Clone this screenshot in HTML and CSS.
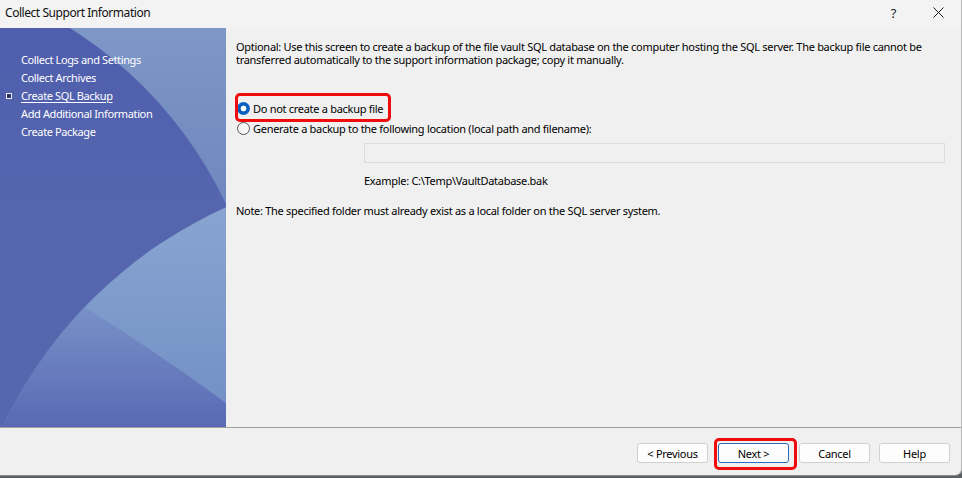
FILE: index.html
```html
<!DOCTYPE html>
<html>
<head>
<meta charset="utf-8">
<link rel="stylesheet" href="styles.css">
</head>
<body>
<div class="window">
  <div class="titlebar">
    <span class="title">Collect Support Information</span>
    <div class="controls">
      <span class="ctl help">?</span>
      <span class="ctl close"><svg width="11" height="11" viewBox="0 0 11 11"><path d="M0.5 0.5L10.5 10.5M10.5 0.5L0.5 10.5" stroke="#1a1a1a" stroke-width="1"/></svg></span>
    </div>
  </div>
  <div class="main">
    <aside class="sidebar">
      <svg class="art" width="226" height="399" viewBox="0 0 226 399">
        <defs>
          <linearGradient id="gLight" x1="0" y1="0" x2="0" y2="220" gradientUnits="userSpaceOnUse">
            <stop offset="0" stop-color="#7d97c7"/>
            <stop offset="1" stop-color="#6b84bd"/>
          </linearGradient>
          <linearGradient id="gDark" x1="0" y1="0" x2="0" y2="399" gradientUnits="userSpaceOnUse">
            <stop offset="0" stop-color="#4f5ead"/>
            <stop offset="0.5" stop-color="#5666ae"/>
            <stop offset="1" stop-color="#5567ae"/>
          </linearGradient>
          <linearGradient id="gB" x1="0" y1="175" x2="0" y2="375" gradientUnits="userSpaceOnUse">
            <stop offset="0" stop-color="#88a5d1"/>
            <stop offset="1" stop-color="#7491c7"/>
          </linearGradient>
          <linearGradient id="gD" x1="0" y1="280" x2="0" y2="399" gradientUnits="userSpaceOnUse">
            <stop offset="0" stop-color="#7891c7"/>
            <stop offset="1" stop-color="#5969b4"/>
          </linearGradient>
          <clipPath id="clipB"><circle cx="410" cy="590" r="450"/></clipPath>
        </defs>
        <rect width="226" height="399" fill="url(#gLight)"/>
        <circle cx="-150" cy="352" r="415" fill="url(#gDark)"/>
        <circle cx="410" cy="590" r="450" fill="url(#gB)"/>
        <path d="M0 230 Q110 290 226 375 L226 399 L0 399Z" fill="url(#gD)" clip-path="url(#clipB)"/>
      </svg>
      <ul class="nav">
        <li class="nav-item">Collect Logs and Settings</li>
        <li class="nav-item">Collect Archives</li>
        <li class="nav-item current"><span class="marker"></span><span class="nav-link">Create SQL Backup</span></li>
        <li class="nav-item">Add Additional Information</li>
        <li class="nav-item">Create Package</li>
      </ul>
    </aside>
    <section class="content">
      <p class="intro">Optional: Use this screen to create a backup of the file vault SQL database on the computer hosting the SQL server. The backup file cannot be<br>transferred automatically to the support information package; copy it manually.</p>
      <div class="options">
        <div class="radio-row">
          <span class="radio on"></span><span class="label">Do not create a backup file</span>
          <span class="callout callout-radio"></span>
        </div>
        <div class="radio-row">
          <span class="radio"></span><span class="label">Generate a backup to the following location (local path and filename):</span>
        </div>
      </div>
      <div class="path-block">
        <div class="textbox"></div>
        <div class="example">Example: C:\Temp\VaultDatabase.bak</div>
      </div>
      <p class="note">Note: The specified folder must already exist as a local folder on the SQL server system.</p>
    </section>
  </div>
  <div class="footer">
    <button class="btn">&lt; Previous</button>
    <span class="btn-wrap"><button class="btn default">Next &gt;</button><span class="callout callout-btn"></span></span>
    <button class="btn">Cancel</button>
    <button class="btn btn-last">Help</button>
  </div>
</div>
</body>
</html>
```

FILE: styles.css
```css
* { box-sizing: border-box; }
html, body { margin: 0; padding: 0; }
body {
  width: 962px;
  height: 478px;
  background: #5b5f66;
  font-family: "Noto Sans", "Open Sans", sans-serif;
  font-size: 11px;
  color: #000;
  overflow: hidden;
}
.window {
  width: 962px;
  height: 476px;
  background: #f0f0f0;
  border-bottom: 1px solid #8c8c8c;
  border-right: 1px solid #b8b8b8;
  border-bottom-right-radius: 7px;
  display: flex;
  flex-direction: column;
  overflow: hidden;
}
.titlebar {
  height: 28px;
  flex: none;
  display: flex;
  align-items: center;
  justify-content: space-between;
  background: #f3f3f3;
}
.title {
  padding-left: 5px;
  font-size: 12px;
  letter-spacing: -0.45px;
  color: #111;
  padding-bottom: 3px;
}
.controls { display: flex; align-items: center; padding-bottom: 3px; }
.ctl { display: flex; align-items: center; justify-content: center; width: 46px; height: 24px; }
.help { font-size: 13px; color: #222; padding-left: 3px; }
.main {
  height: 399px;
  flex: none;
  display: flex;
}
.sidebar {
  width: 226px;
  flex: none;
  position: relative;
  overflow: hidden;
}
.art { position: absolute; left: 0; top: 0; display: block; }
.nav {
  position: relative;
  list-style: none;
  margin: 0;
  padding: 23px 0 0 6px;
}
.nav-item {
  height: 18px;
  line-height: 18px;
  padding-left: 15px;
  color: #fff;
  letter-spacing: -0.38px;
  white-space: nowrap;
}
.nav-item.current { padding-left: 0; display: flex; align-items: center; }
.marker {
  width: 6px;
  height: 6px;
  border: 1px solid #e8ecf6;
  background: #2c3566;
  margin-right: 9px;
  flex: none;
}
.nav-link { text-decoration: underline; text-underline-offset: 2px; }
.content {
  flex: 1;
  padding: 12px 16px 0 10px;
  letter-spacing: -0.29px;
}
.intro, .note { margin: 0; line-height: 13px; }
.options { margin-top: 32px; }
.radio-row {
  position: relative;
  height: 20px;
  display: flex;
  align-items: center;
  padding-left: 1px;
  white-space: nowrap;
}
.radio {
  width: 13px;
  height: 13px;
  border-radius: 50%;
  border: 1px solid #555;
  background: #f6f6f6;
  margin-right: 3px;
  flex: none;
}
.radio.on {
  border: none;
  background: radial-gradient(circle, #fff 0 2.6px, #0a5fc0 3.2px);
}
.callout {
  position: absolute;
  border: 3px solid #ee0c0c;
  border-radius: 5px;
  pointer-events: none;
}
.callout-radio { left: -1px; top: -5px; width: 156px; height: 29px; }
.path-block { padding-left: 128px; margin-top: 5px; }
.textbox {
  height: 20px;
  border: 1px solid #dcdcdc;
  background: #f0f0f0;
}
.example { margin-top: 11px; line-height: 13px; }
.note { margin-top: 17px; }
.footer {
  flex: 1;
  border-top: 1px solid #a0a0a0;
  display: flex;
  justify-content: flex-end;
  align-items: flex-start;
  padding: 15px 11px 0 0;
  gap: 10px;
}
.btn {
  width: 71px;
  height: 20px;
  background: #fdfdfd;
  border: 1px solid #d0d0d0;
  border-radius: 3px;
  font-family: "Noto Sans", "Open Sans", sans-serif;
  font-size: 11px;
  letter-spacing: -0.3px;
  color: #000;
  padding: 0;
  line-height: 17px;
}
.btn-last { margin-left: -1px; }
.btn.default { border-color: #2a6bc0; }
.btn-wrap { position: relative; display: flex; }
.callout-btn { left: -4px; right: -8px; top: -5px; bottom: -7px; }
```
